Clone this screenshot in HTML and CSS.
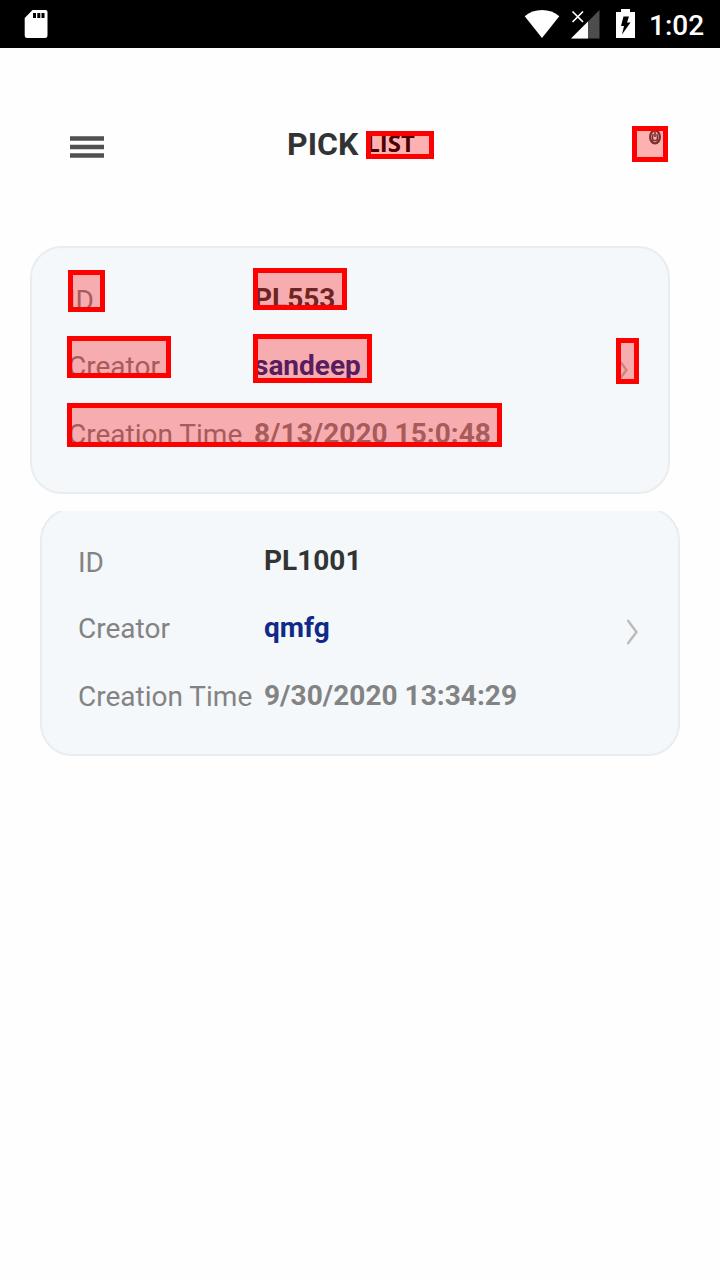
FILE: index.html
```html
<!DOCTYPE html>
<html lang="en">
<head>
<meta charset="utf-8">
<title>Pick List</title>
<link rel="stylesheet" href="styles.css">
</head>
<body>
<div class="status">
  <svg class="sd" width="24" height="30" viewBox="0 0 24 30"><path d="M8.500 1H21.500Q23.500 1 23.500 3V26Q23.500 29 21 29H3Q.7 29 .7 26V9Z" fill="#fff"/><path d="M9 4h3v5H9zM13.300 4h3v5h-3zM17.500 4h3v5h-3z" fill="#000"/></svg>
  <div class="status-right">
    <svg width="36" height="30" viewBox="0 0 36 30"><path d="M18 29 .7 7.300Q8 1 18 1T35.300 7.300Z" fill="#fff"/></svg>
    <svg class="signal" width="30" height="30" viewBox="0 0 30 30"><path d="M29.500 1V29.500H1Z" fill="#4d4d4d"/><path d="M18 12.500V29.500H1Z" fill="#fff"/><path d="M2.500 2.500 13 13M13 2.500 2.500 13" stroke="#fff" stroke-width="1.700"/></svg>
    <svg class="battery" width="20" height="30" viewBox="0 0 20 30"><path d="M5 0h9v3H19V29H0V3h5Z" fill="#fff"/><path d="M7.500 7.500h5.500l-2 6h3.500L6 25.500l2-8.500H5Z" fill="#000"/></svg>
    <span class="clock">1:02</span>
  </div>
</div>
<header class="header">
  <svg class="menu" width="34" height="22" viewBox="0 0 34 22"><path d="M0 2.500H34M0 11H34M0 19.500H34" stroke="#505050" stroke-width="4.300"/></svg>
  <h1 class="title">PICK <span class="title-tail">LIST</span></h1>
  <div class="action">
    <svg width="14" height="16" viewBox="0 0 14 16"><ellipse cx="7" cy="7" rx="4.900" ry="6.300" fill="none" stroke="#444" stroke-width="2.200"/><path d="M5.200 4.200Q3.500 7.500 5 10.500H9Q10.500 7.500 8.800 4.200M7 2v5" fill="none" stroke="#444" stroke-width="1.600"/></svg>
  </div>
  <i class="mark mark-list"></i>
  <i class="mark mark-action"></i>
</header>
<main class="list">
  <section class="card">
    <dl class="fields">
      <dt>ID</dt><dd class="id">PL553</dd>
      <dt>Creator</dt><dd class="creator">sandeep</dd>
      <dt>Creation Time</dt><dd class="time">8/13/2020 15:0:48</dd>
    </dl>
    <svg class="chevron" width="12" height="28" viewBox="0 0 12 28"><path d="M1.500 2 10.500 14 1.500 26" fill="none" stroke="#bbb" stroke-width="2.400"/></svg>
    <i class="mark mark-label-id"></i>
    <i class="mark mark-id"></i>
    <i class="mark mark-label-creator"></i>
    <i class="mark mark-creator"></i>
    <i class="mark mark-time"></i>
    <i class="mark mark-chevron"></i>
  </section>
  <div class="clip">
    <section class="card card-next">
      <dl class="fields">
        <dt>ID</dt><dd class="id">PL1001</dd>
        <dt>Creator</dt><dd class="creator">qmfg</dd>
        <dt>Creation Time</dt><dd class="time">9/30/2020 13:34:29</dd>
      </dl>
      <svg class="chevron" width="12" height="28" viewBox="0 0 12 28"><path d="M1.500 2 10.500 14 1.500 26" fill="none" stroke="#bbb" stroke-width="2.400"/></svg>
    </section>
  </div>
</main>
</body>
</html>
```
FILE: styles.css
```css
* { box-sizing: border-box; }
body { margin: 0; width: 720px; height: 1280px; overflow: hidden; background: #fefefe; font-family: Roboto, sans-serif; }
svg { display: block; flex: none; }
.status { height: 48px; background: #000; display: flex; justify-content: space-between; padding: 9px 16px 0 24px; }
.status-right { display: flex; }
.signal { margin-left: 10px; }
.battery { margin-left: 16px; }
.clock { width: 55px; margin-left: 13px; color: #fff; font-size: 28px; font-weight: 500; line-height: 33px; white-space: nowrap; }
.header { position: relative; height: 198px; display: flex; align-items: flex-start; padding-left: 70px; }
.menu { margin-top: 88px; }
.title { margin: 76px 0 0 183px; width: 340px; font-size: 32px; line-height: 40px; font-weight: 700; color: #323434; white-space: pre; display: flex; }
.title-tail { font: 700 24px/38px "Open Sans", sans-serif; color: #000; }
.action { margin: 82px 0 0 21px; }
.list { padding: 0 30px; }
.card { position: relative; width: 640px; height: 248px; border: 2px solid #e9edef; border-radius: 32px; background: #f4f8fb; display: flex; padding: 33px 0 0 36px; }
.clip { margin: 17px -10px 0 10px; height: 245px; overflow: hidden; }
.card-next { margin-top: -3px; }
.fields { margin: 0; width: 548px; display: grid; grid-template-columns: 186px 1fr; grid-template-rows: 66px 68px 60px; font-size: 28px; line-height: 36px; color: #838383; white-space: nowrap; }
.fields dt { padding-top: 2px; }
.fields dd { margin: 0; font-weight: 700; }
.fields .id { color: #323434; }
.fields .creator { color: #112a88; padding-top: 1px; }
.fields .time { padding-top: 1px; letter-spacing: .04px; }
.chevron { margin-top: 75px; }
.mark { position: absolute; border: 5px solid #f00; background: rgba(255, 0, 0, .3); background-clip: padding-box; }
.mark-list { left: 366px; top: 83px; width: 68px; height: 28px; }
.mark-action { left: 632px; top: 78px; width: 36px; height: 36px; }
.mark-label-id { left: 36px; top: 22px; width: 37px; height: 42px; }
.mark-id { left: 221px; top: 20px; width: 94px; height: 42px; }
.mark-label-creator { left: 35px; top: 88px; width: 104px; height: 42px; }
.mark-creator { left: 221px; top: 86px; width: 119px; height: 49px; }
.mark-time { left: 35px; top: 155px; width: 435px; height: 44px; }
.mark-chevron { left: 584px; top: 90px; width: 23px; height: 46px; }
```
